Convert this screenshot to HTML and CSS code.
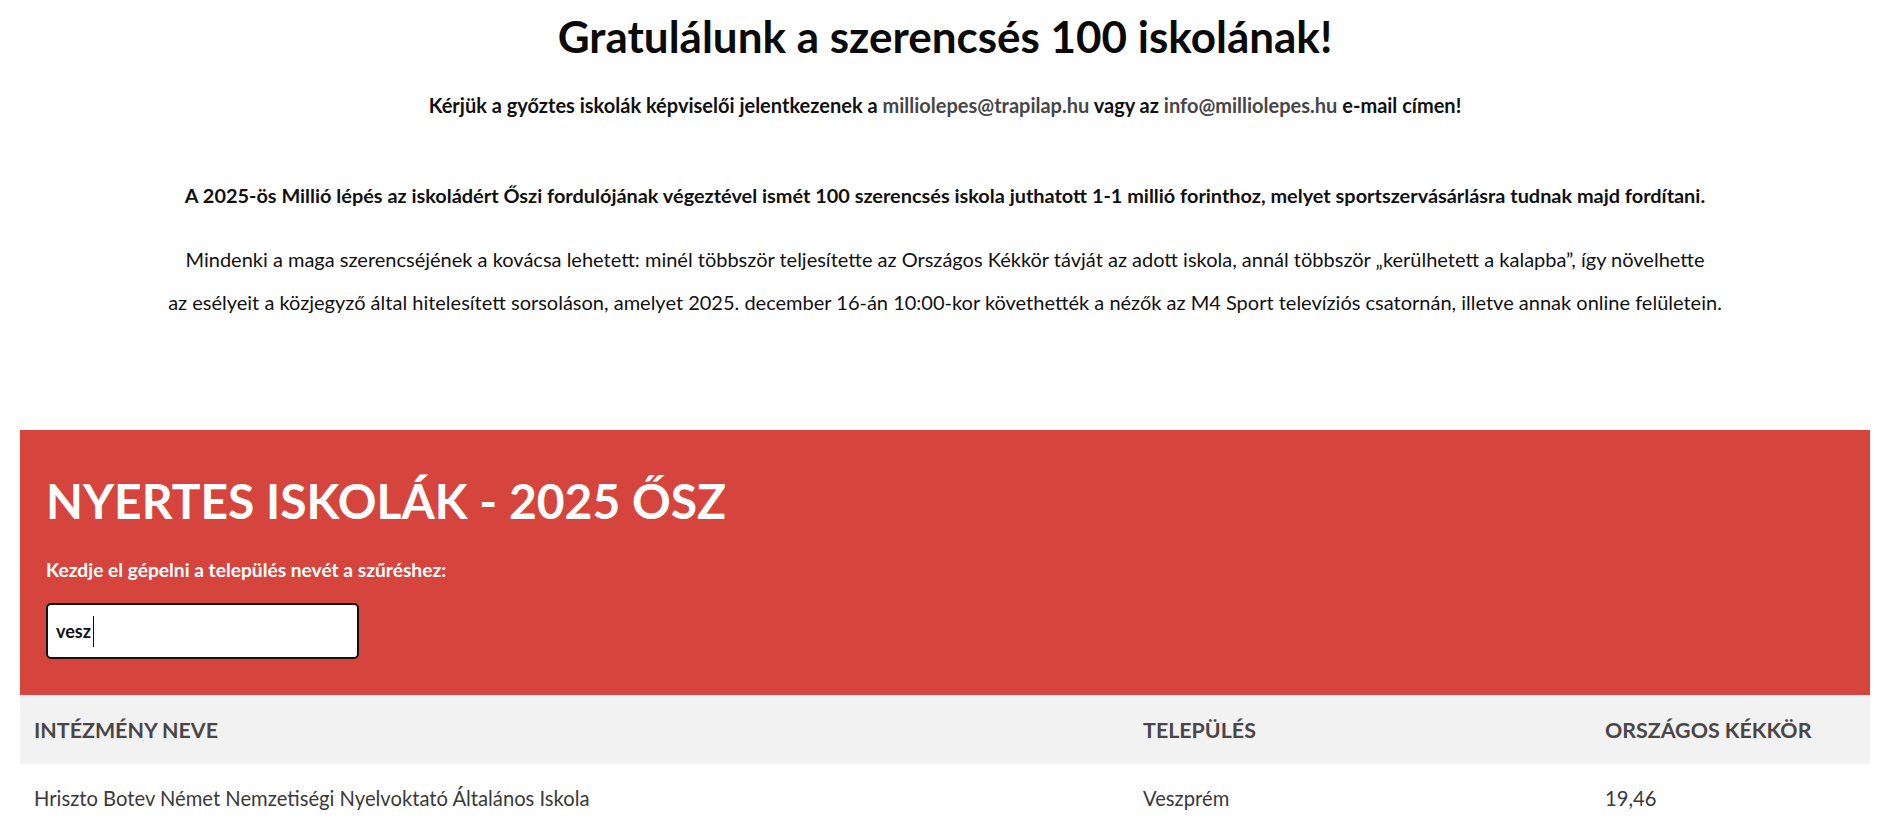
FILE: index.html
```
<!DOCTYPE html>
<html lang="hu">
<head>
<meta charset="utf-8">
<title>Nyertes iskolák - 2025 ősz</title>
<link rel="stylesheet" href="styles.css">
</head>
<body>
<main class="page">
  <section class="intro">
    <h1 class="title">Gratulálunk a szerencsés 100 iskolának!</h1>
    <p class="lead">Kérjük a győztes iskolák képviselői jelentkezenek a <a class="mail" href="#">milliolepes@trapilap.hu</a> vagy az <a class="mail" href="#">info@milliolepes.hu</a> e-mail címen!</p>
    <p class="summary">A 2025-ös Millió lépés az iskoládért Őszi fordulójának végeztével ismét 100 szerencsés iskola juthatott 1-1 millió forinthoz, melyet sportszervásárlásra tudnak majd fordítani.</p>
    <p class="text">Mindenki a maga szerencséjének a kovácsa lehetett: minél többször teljesítette az Országos Kékkör távját az adott iskola, annál többször „kerülhetett a kalapba”, így növelhette<br>az esélyeit a közjegyző által hitelesített sorsoláson, amelyet 2025. december 16-án 10:00-kor követhették a nézők az M4 Sport televíziós csatornán, illetve annak online felületein.</p>
  </section>

  <section class="winners">
    <div class="panel">
      <h2 class="panel-title">NYERTES ISKOLÁK - 2025 ŐSZ</h2>
      <label class="filter-label" for="filter">Kezdje el gépelni a település nevét a szűréshez:</label>
      <div class="filter-wrap">
        <input class="filter" id="filter" type="text" value="vesz">
        <span class="caret"></span>
      </div>
    </div>
    <div class="table">
      <div class="row head">
        <div class="cell">INTÉZMÉNY NEVE</div>
        <div class="cell">TELEPÜLÉS</div>
        <div class="cell">ORSZÁGOS KÉKKÖR</div>
      </div>
      <div class="row">
        <div class="cell">Hriszto Botev Német Nemzetiségi Nyelvoktató Általános Iskola</div>
        <div class="cell">Veszprém</div>
        <div class="cell">19,46</div>
      </div>
    </div>
  </section>
</main>
</body>
</html>
```
FILE: styles.css
```
* { box-sizing: border-box; }
html, body { margin: 0; padding: 0; background: #fff; }
body {
  font-family: Lato, "Noto Sans", "DejaVu Sans", sans-serif;
  color: #111;
}
.page {
  padding: 0 18px 0 20px;
}
.intro {
  text-align: center;
}
.title {
  margin: 12px 0 0;
  font-size: 44px;
  line-height: 48px;
  font-weight: 700;
  color: #0a0a0a;
}
.lead {
  margin: 24px 0 0;
  font-size: 20px;
  line-height: 43px;
  font-weight: 700;
}
.mail {
  color: #464646;
  font-weight: 700;
  text-decoration: none;
}
.summary {
  margin: 47px 0 0;
  font-size: 19.9px;
  line-height: 43px;
  font-weight: 700;
}
.text {
  margin: 21px 0 0;
  font-size: 20px;
  line-height: 43px;
  font-weight: 400;
}
.winners {
  margin-top: 106px;
}
.panel {
  background: #d6453d;
  padding: 44px 26px 36px;
  display: flex;
  flex-direction: column;
  align-items: flex-start;
}
.panel-title {
  margin: 0;
  font-size: 48px;
  line-height: 53px;
  font-weight: 700;
  color: #fff;
}
.filter-label {
  margin-top: 31px;
  font-size: 19.2px;
  line-height: 24px;
  font-weight: 700;
  color: #fff;
}
.filter-wrap {
  position: relative;
  margin-top: 21px;
}
.filter {
  display: block;
  width: 313px;
  height: 56px;
  border: 2px solid #111;
  border-radius: 5px;
  background: #fff;
  padding: 0 0 0 8px;
  font-family: Lato, "Noto Sans", sans-serif;
  font-size: 18px;
  font-weight: 700;
  color: #111;
  outline: none;
}
.caret {
  position: absolute;
  left: 47px;
  top: 13px;
  width: 1px;
  height: 31px;
  background: #111;
}
.table {
  display: flex;
  flex-direction: column;
}
.row {
  display: grid;
  grid-template-columns: 59.95% 24.97% 1fr;
  align-items: center;
  height: 67px;
}
.cell {
  padding-left: 14px;
  font-size: 20.2px;
  color: #3a3a3a;
}
.head {
  background: #f2f2f2;
  height: 69px;
}
.head .cell {
  font-size: 21.4px;
  font-weight: 700;
  color: #4a4646;
}
```
